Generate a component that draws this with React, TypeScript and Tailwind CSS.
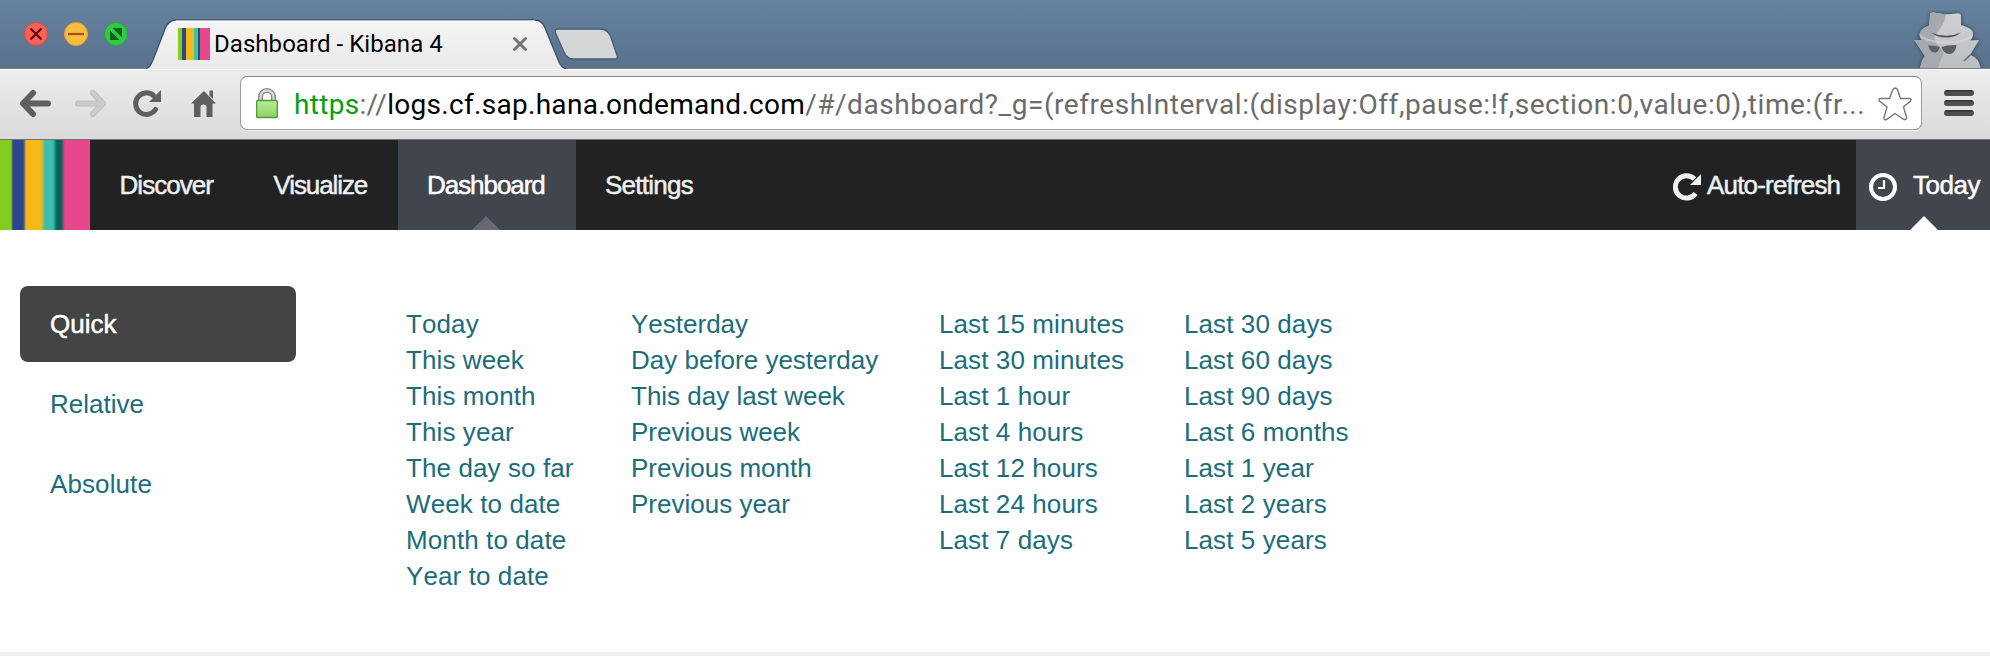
import React from "react";

const stripes =
  "bg-[linear-gradient(90deg,#84cc1f_0_11px,#5a8a4c_12px,#2d4490_13px_23px,#7a7168_24.5px,#f3ba18_26px_41px,#a4bb5c_43px,#3cbeb1_45px_53px,#1d8d82_55px,#036157_57px_61px,#83506f_63px,#e9478b_65px_90px)]";

const ranges: { width: string; items: string[] }[] = [
  {
    width: "w-[225px] tracking-[0.1px]",
    items: ["Today", "This week", "This month", "This year", "The day so far", "Week to date", "Month to date", "Year to date"],
  },
  {
    width: "w-[308px]",
    items: ["Yesterday", "Day before yesterday", "This day last week", "Previous week", "Previous month", "Previous year"],
  },
  {
    width: "w-[245px] tracking-[0.1px]",
    items: ["Last 15 minutes", "Last 30 minutes", "Last 1 hour", "Last 4 hours", "Last 12 hours", "Last 24 hours", "Last 7 days"],
  },
  {
    width: "w-[245px] tracking-[0.1px]",
    items: ["Last 30 days", "Last 60 days", "Last 90 days", "Last 6 months", "Last 1 year", "Last 2 years", "Last 5 years"],
  },
];

function WindowButtons() {
  return (
    <svg width="146" height="69" viewBox="0 0 146 69" className="shrink-0">
      <circle cx="36" cy="34" r="11.5" fill="#fc605b" stroke="#e2463f" />
      <path d="M30.5 28.5l11 11M41.5 28.5l-11 11" stroke="#5f0504" strokeWidth="2.2" />
      <circle cx="76" cy="34" r="11.5" fill="#fdbc40" stroke="#e0a02f" />
      <path d="M68 34h16" stroke="#985712" strokeWidth="2.2" />
      <circle cx="116" cy="34" r="11.5" fill="#34c84a" stroke="#22a933" />
      <path d="M110 30.500v9.500h9.500zM112.500 28h9.500v9.500z" fill="#0b6412" />
    </svg>
  );
}

function Incognito() {
  return (
    <svg width="76" height="58" viewBox="0 0 76 58" className="shrink-0">
      <defs>
        <filter id="hatGlow" x="-20%" y="-20%" width="140%" height="140%">
          <feDropShadow dx="0" dy="0" stdDeviation="2" floodColor="#1f3042" floodOpacity="0.9" />
        </filter>
        <linearGradient id="coat" x1="0" y1="0" x2="0" y2="1">
          <stop offset="0" stopColor="#cfd1d3" />
          <stop offset="1" stopColor="#babdc0" />
        </linearGradient>
      </defs>
      <g filter="url(#hatGlow)">
        <path
          d="M16 5 Q16 2.500 19 2.500 L31 4.500 L44 3.500 Q47 3.500 47 6 V15 Q58 18 59 23 Q59 28 56 30.500 L65 30 L56 45 Q65 47 67 60 H6 Q7 51 11 46 L0.500 30 L8 30 Q5 27 6 22.500 Q8.500 17.500 15.500 15.500 Z"
          fill="url(#coat)"
        />
      </g>
      <path
        d="M16 5 Q16 2.500 19 2.500 L32 4.500 Q31 12 27 17 L20 27 L22 33 L30 42 L23 60 H6 Q7 51 11 46 L0.500 30 L8 30 Q5 27 6 22.500 Q8.500 17.500 15.500 15.500 Z"
        fill="#a6a9ad"
      />
      <path d="M7 28 Q19 34 34 33.500 Q50 33.500 58 27.500 Q59 26 59 24 Q50 31.500 33 31.500 Q16 31.500 6 24.500 Q6 26.500 7 28Z" fill="#dcdee0" opacity="0.5" />
      <path d="M17 22.500 Q32 29 47 22.500 Q41 27.500 32 27.500 Q23 27.500 17 22.500Z" fill="#4e5155" />
      <path d="M14 35.500 Q20 35 26 37 Q24.500 42.500 20.500 42.500 Q16 42 14 35.500ZM27.500 37 Q34 34.500 42.500 35 Q41.500 44 35 44 Q29.500 43.500 27.500 37Z" fill="#5b5e62" />
      <path d="M50 51 L56.500 44.800" fill="none" stroke="#606367" strokeWidth="1.400" />
    </svg>
  );
}

function TitleBar() {
  return (
    <div className="flex h-[69px] items-end bg-[linear-gradient(180deg,#67829f,#58728e)] shadow-[inset_0_-1px_0_#7f8385]">
      <WindowButtons />
      <div className="relative h-[69px] w-[409px] shrink-0">
        <svg className="absolute left-0 top-0" width="480" height="69" viewBox="0 0 480 69">
          <defs>
            <linearGradient id="tab" x1="0" y1="0" x2="0" y2="1">
              <stop offset="0" stopColor="#f4f4f4" />
              <stop offset="1" stopColor="#eaeaea" />
            </linearGradient>
          </defs>
          <path d="M-1 68.500 C4 68.500 5 64 7 60 L19 29 Q22.500 20 30 20 H389 Q396 20 399 28 L413 62 Q416 68.500 420 69 H-1Z" fill="url(#tab)" />
          <path d="M-1 68.500 C4 68.500 5 64 7 60 L19 29 Q22.500 20 30 20 H389 Q396 20 399 28 L413 62 Q416 68.500 420 68.500" fill="none" stroke="#3e5066" strokeWidth="1.300" />
          <path d="M30 21 H389" stroke="#fff" strokeWidth="1" />
        </svg>
        <div className="relative flex h-full items-center pl-8 pt-[19px]">
          <svg width="32" height="32" viewBox="0 0 32 32" className="shrink-0">
            <path d="M0 0h4v32H0z" fill="#84cc1f" />
            <path d="M4 0h4v32H4z" fill="#2d4490" />
            <path d="M8 0h8v32H8z" fill="#f3ba18" />
            <path d="M16 0h4v32h-4z" fill="#3cbeb1" />
            <path d="M20 0h2v32h-2z" fill="#036157" />
            <path d="M22 0h10v32H22z" fill="#e9478b" />
          </svg>
          <span className="ml-1 w-[299px] whitespace-nowrap text-[24px] leading-8 tracking-[0.05px] text-black">Dashboard - Kibana 4</span>
          <svg width="14" height="14" viewBox="0 0 14 14" className="shrink-0">
            <path d="M1.500 1.500l11 11M12.500 1.500l-11 11" stroke="#757575" strokeWidth="3" strokeLinecap="round" />
          </svg>
        </div>
      </div>
      <svg width="64" height="69" viewBox="555 0 64 69" className="relative shrink-0">
        <path
          d="M557.500 29 H600 Q607.500 29 610.500 36 L617 55.500 Q618 59 614.500 59 H574 Q567 59 564 52 L555.600 33 Q554.500 29 557.500 29Z"
          fill="#d5d6d8"
          stroke="#465b74"
          strokeWidth="1.300"
        />
      </svg>
      <div className="grow" />
      <div className="relative mb-px flex">
        <Incognito />
      </div>
    </div>
  );
}

function Toolbar() {
  return (
    <div className="flex h-[71px] items-start border-b border-[#747474] bg-[linear-gradient(180deg,#ededed,#dadada)] shadow-[inset_0_1px_0_#fafafa]">
      <svg width="240" height="70" viewBox="0 69 240 70" className="shrink-0">
        <g fill="none" strokeLinecap="round" strokeLinejoin="round" strokeWidth="6">
          <path d="M48 103.500H25M33 93L23 103.500L33 114" stroke="#5f5f5f" />
          <path d="M78 103.500h23M93 93l10 10.500L93 114" stroke="#bebebe" />
          <path d="M78 103.500h23M93 93l10 10.500L93 114" stroke="#cbcbcb" strokeWidth="4" />
          <path d="M155.500 109.500A10.800 10.800 0 1 1 153.500 95.500" stroke="#5f5f5f" strokeWidth="5" />
        </g>
        <path d="M161 90v12h-12z" fill="#5f5f5f" />
        <path d="M204 91L216 103.500H212.500V117H206.500V107Q206.500 104.500 203.500 104.500Q200.500 104.500 200.500 107V117H194V103.500H191ZM209.500 90.500H213V99L209.500 95.500Z" fill="#5f5f5f" />
      </svg>
      <div className="mt-[7px] flex h-[54px] w-[1682px] shrink-0 items-center rounded-[7px] border border-[#999] border-t-[#858585] bg-white shadow-[0_1px_0_#f2f2f2]">
        <svg width="53" height="52" viewBox="241 77 53 52" className="shrink-0">
          <defs>
            <linearGradient id="lock" x1="0" y1="0" x2="0" y2="1">
              <stop offset="0" stopColor="#b7ee93" />
              <stop offset="1" stopColor="#8fcf68" />
            </linearGradient>
          </defs>
          <path d="M260.500 101V97A6.500 6.500 0 0 1 273.500 97V101" fill="none" stroke="#858585" strokeWidth="5" />
          <path d="M260.500 101V97A6.500 6.500 0 0 1 273.500 97V101" fill="none" stroke="#d6d6d6" strokeWidth="2.400" />
          <rect x="256.700" y="100.500" width="20.600" height="17" rx="1" fill="url(#lock)" stroke="#4e9a35" strokeWidth="1.300" />
        </svg>
        <div className="w-[1581px] whitespace-nowrap pt-[3px] text-[28px] leading-[50px] tracking-[0.3px] text-[#6b6b6b]">
          <span className="text-[#00a010]">https</span>://<span className="text-black">logs.cf.sap.hana.ondemand.com</span>
          <span className="tracking-[0.54px]">/#/dashboard?_g=(refreshInterval:(display:Off,pause:!f,section:0,value:0),time:(fr...</span>
        </div>
        <svg width="40" height="40" viewBox="0 0 40 40" className="shrink-0">
          <path
            d="M20 5 Q22 5 22.800 7.500 L25.500 15.500 H34.500 Q37 16 35.500 18 L28.500 24 L31.500 34 Q32 37 29 36.500 L20 30.500 L11.500 36.500 Q8.500 37.500 9 34.500 L12 24 L4.500 18 Q3 16 5.500 15.500 H14.500 L17.500 7.500 Q18.500 5 20 5Z"
            fill="#fff"
            stroke="#777"
            strokeWidth="1.400"
          />
        </svg>
      </div>
      <svg width="68" height="70" viewBox="1922 69 68 70" className="shrink-0">
        <path d="M1947 93h24M1947 103h24M1947 113h24" stroke="#4f4f4f" strokeWidth="6" strokeLinecap="round" />
        <path d="M1946 90.800h26M1946 100.800h26M1946 110.800h26" stroke="#2f2f2f" strokeWidth="1.300" strokeLinecap="round" />
      </svg>
    </div>
  );
}

function Arrow({ className, fill }: { className: string; fill: string }) {
  return (
    <svg width="28" height="14" viewBox="0 0 28 14" className={`absolute bottom-0 ${className}`}>
      <path d="M14 0l14 14H0z" fill={fill} />
    </svg>
  );
}

function NavBar() {
  const item = "relative flex h-full items-center pt-px";
  return (
    <nav className="flex h-[90px] bg-[#222] text-[26px] text-[#ecf0f1] [-webkit-text-stroke:0.5px_currentColor]">
      <div className={`h-full w-[90px] ${stripes}`} />
      <div className={`${item} w-[154px] pl-[29.5px] tracking-[-0.95px]`}>Discover</div>
      <div className={`${item} w-[154px] pl-[29.5px] tracking-[-1.1px]`}>Visualize</div>
      <div className={`${item} w-[178px] bg-[#41454d] pl-[29px] tracking-[-1.05px] text-white`}>
        Dashboard
        <Arrow className="left-[74px]" fill="#666876" />
      </div>
      <div className={`${item} pl-[29px] tracking-[-0.75px]`}>Settings</div>
      <div className="grow" />
      <div className="flex h-full w-[183px] items-center">
        <svg width="28" height="28" viewBox="0 0 28 28" className="mt-1 shrink-0">
          <path d="M22.600 20.500A11.200 11.200 0 1 1 21.500 6" fill="none" stroke="#ecf0f1" strokeWidth="5" />
          <path d="M28 1v11h-11z" fill="#ecf0f1" />
        </svg>
        <span className="ml-1.5 whitespace-nowrap tracking-[-0.82px]">Auto-refresh</span>
      </div>
      <div className="relative flex h-full w-[134px] items-center bg-[#41454d] text-white">
        <svg width="28" height="28" viewBox="0 0 28 28" className="ml-[13px] mt-1 shrink-0">
          <circle cx="14" cy="14" r="12" fill="none" stroke="#fff" strokeWidth="4" />
          <path d="M15 7v8H9" fill="none" stroke="#fff" strokeWidth="2.200" />
        </svg>
        <span className="ml-4 tracking-[-0.5px]">Today</span>
        <Arrow className="left-[54px]" fill="#fff" />
      </div>
    </nav>
  );
}

function TimePicker() {
  return (
    <main className="flex h-[422px] text-[26px] text-[#1b6d7c]">
      <ul className="ml-5 mt-14 w-[276px] shrink-0 space-y-1">
        <li className="flex h-[76px] items-center rounded-lg bg-[#444] pl-[30px] text-white [-webkit-text-stroke:0.5px_currentColor]">Quick</li>
        <li className="flex h-[76px] items-center pl-[30px]">Relative</li>
        <li className="flex h-[76px] items-center pl-[30px] tracking-[0.1px]">Absolute</li>
      </ul>
      <div className="ml-[110px] mt-[76px] flex grow [font-kerning:none]">
        {ranges.map((column) => (
          <ul key={column.items[0]} className={`${column.width} shrink-0`}>
            {column.items.map((label) => (
              <li key={label} className="h-9 whitespace-nowrap leading-9">
                {label}
              </li>
            ))}
          </ul>
        ))}
      </div>
    </main>
  );
}

export default function App() {
  return (
    <div className="h-[656px] w-[1990px] overflow-hidden bg-white">
      <header className="font-['Roboto',sans-serif]">
        <TitleBar />
        <Toolbar />
      </header>
      <div className="flex flex-col font-['Liberation_Sans',Arial,sans-serif]">
        <NavBar />
        <TimePicker />
        <div className="relative h-1 bg-[#ecf0f1] shadow-[0_-1px_3px_#f3f4f5]" />
      </div>
    </div>
  );
}
